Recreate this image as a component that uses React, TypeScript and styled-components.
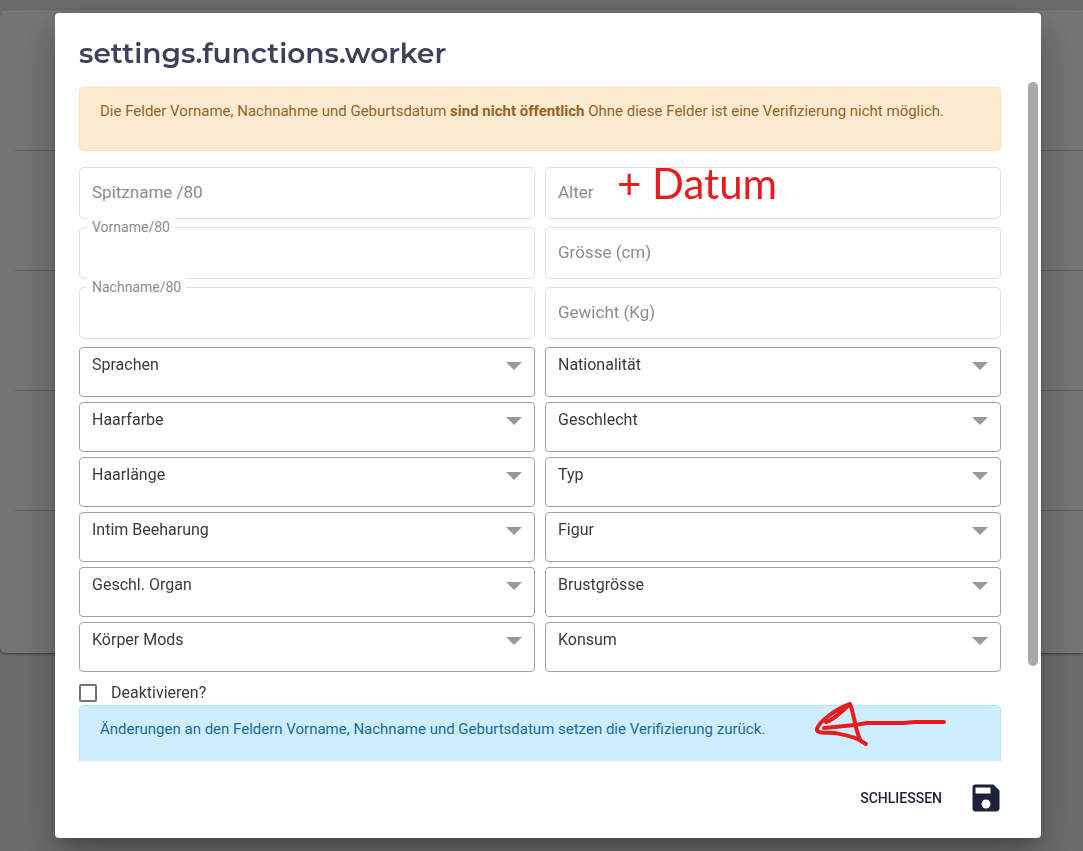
import React, { useId } from "react";
import styled, { createGlobalStyle } from "styled-components";
import { MdSave } from "react-icons/md";

const GlobalStyle = createGlobalStyle`
  * { box-sizing: border-box; }
  body {
    margin: 0;
    background: #ececec;
    font-family: Roboto, "Liberation Sans", sans-serif;
    font-size: 16px;
    color: #3a3a3a;
  }
`;

const Page = styled.main`
  height: 100vh;
  overflow: hidden;
  padding-top: 10px;
`;

const PageCard = styled.section`
  padding: 21px 0 22px 15px;
  background: #fff;
  border-radius: 6px 0 0 6px;
  box-shadow: 0 1px 3px rgba(0, 0, 0, 0.5);
`;

const PageRow = styled.div`
  height: 120px;
  border-bottom: 1px solid #d4d4d4;

  &:last-child {
    border-bottom: 0;
  }
`;

const Backdrop = styled.div`
  position: fixed;
  inset: 0;
  display: flex;
  padding: 13px 42px 13px 55px;
  background: rgba(0, 0, 0, 0.54);
`;

const Dialog = styled.div`
  flex: 1;
  min-width: 0;
  display: flex;
  flex-direction: column;
  background: #fff;
  border-radius: 4px;
  box-shadow: 0 11px 15px -7px rgba(0, 0, 0, 0.2),
    0 24px 38px 3px rgba(0, 0, 0, 0.14), 0 9px 46px 8px rgba(0, 0, 0, 0.12);
`;

const Title = styled.h2`
  margin: 0;
  padding: 20px 24px 9px;
  font-family: Montserrat, Inter, sans-serif;
  font-size: 28px;
  line-height: 40px;
  font-weight: 600;
  color: #3b4259;
`;

const Body = styled.div`
  flex: 1;
  min-height: 0;
  display: flex;
  padding-right: 3px;
`;

const Scroller = styled.div`
  flex: 1;
  min-width: 0;
  overflow-y: auto;
  scrollbar-width: none;
  padding: 5px 27px 20px 24px;
`;

const Track = styled.div`
  width: 10px;
`;

const Thumb = styled.div`
  height: 86%;
  border-radius: 5px;
  background: #a9a9a9;
`;

const Banner = styled.div<{ $tone: "warning" | "info" }>`
  position: relative;
  padding: 12px 20px;
  border: 1px solid ${(p) => (p.$tone === "warning" ? "#fee0b6" : "#b4e5fb")};
  border-radius: 4px;
  background: ${(p) => (p.$tone === "warning" ? "#fdebd0" : "#cdeefd")};
  color: ${(p) => (p.$tone === "warning" ? "#946327" : "#1b699c")};
  font-size: 15px;

  p {
    margin: 0 0 16px;
    line-height: 22px;
  }
`;

const FieldGrid = styled.div<{ $gap: number }>`
  display: grid;
  grid-template-columns: 1fr 1fr;
  gap: ${(p) => p.$gap}px 10px;
`;

const Form = styled.form`
  display: flex;
  flex-direction: column;
  gap: 8px;
  margin-top: 16px;
`;

const Field = styled.div`
  position: relative;
  display: flex;
`;

const TextInput = styled.input`
  width: 100%;
  height: 52px;
  padding: 0 12px;
  border: 1px solid #e0e0e0;
  border-radius: 5px;
  background: #fff;
  font: inherit;
`;

const InputLabel = styled.label<{ $floating?: boolean }>`
  position: absolute;
  left: ${(p) => (p.$floating ? 8 : 13)}px;
  top: ${(p) => (p.$floating ? -10 : 15)}px;
  padding: 0 ${(p) => (p.$floating ? 5 : 0)}px;
  background: #fff;
  font-size: ${(p) => (p.$floating ? 14 : 17)}px;
  line-height: 20px;
  color: #8c8c8c;
`;

const Select = styled.select`
  appearance: none;
  width: 100%;
  height: 50px;
  padding: 0 40px 0 12px;
  border: 1px solid #a3a3a3;
  border-radius: 4px;
  background: #fff;
  font: inherit;
`;

const SelectLabel = styled.label`
  position: absolute;
  left: 13px;
  top: 8px;
  line-height: 20px;
  pointer-events: none;
`;

const Arrow = styled.svg`
  position: absolute;
  right: 13px;
  top: 15px;
  pointer-events: none;
`;

const CheckRow = styled.label`
  display: flex;
  align-items: center;
  gap: 14px;
  height: 25px;
  margin-bottom: -8px;
`;

const Checkbox = styled.input`
  appearance: none;
  width: 18px;
  height: 18px;
  margin: 0;
  border: 2px solid #757575;
  border-radius: 2px;
  background: #fff;

  &:checked {
    background: #757575;
  }
`;

const Footer = styled.footer`
  display: flex;
  justify-content: flex-end;
  align-items: center;
  gap: 26px;
  height: 77px;
  padding: 0 37px 3px 24px;
`;

const CloseButton = styled.button`
  padding: 0;
  border: 0;
  background: none;
  font: 500 14px/36px Roboto, "Liberation Sans", sans-serif;
  text-transform: uppercase;
  color: #1b2239;
`;

const SaveButton = styled.button`
  display: flex;
  padding: 0;
  border: 0;
  background: none;
  color: #1b2239;
`;

const InkNote = styled.span`
  position: absolute;
  left: 72px;
  top: -8px;
  font-family: Lato, sans-serif;
  font-size: 42px;
  line-height: 48px;
  color: #e81c1c;
  pointer-events: none;
`;

const InkArrow = styled.svg`
  position: absolute;
  right: 54px;
  top: -7px;
  overflow: visible;
  pointer-events: none;
`;

function TextField({ label, floating, children }: { label: string; floating?: boolean; children?: React.ReactNode }) {
  const id = useId();
  return (
    <Field>
      <TextInput id={id} type="text" disabled />
      <InputLabel htmlFor={id} $floating={floating}>{label}</InputLabel>
      {children}
    </Field>
  );
}

function SelectField({ label }: { label: string }) {
  const id = useId();
  return (
    <Field>
      <Select id={id}>
        <option value="" />
      </Select>
      <SelectLabel htmlFor={id}>{label}</SelectLabel>
      <Arrow width="16" height="8" viewBox="0 0 16 8" aria-hidden="true">
        <path d="M0 0H16L8 8Z" fill="#999" />
      </Arrow>
    </Field>
  );
}

const selects = [
  "Sprachen", "Nationalität",
  "Haarfarbe", "Geschlecht",
  "Haarlänge", "Typ",
  "Intim Beeharung", "Figur",
  "Geschl. Organ", "Brustgrösse",
  "Körper Mods", "Konsum",
];

export default function App() {
  return (
    <>
      <GlobalStyle />
      <Page>
        <PageCard>
          <PageRow />
          <PageRow />
          <PageRow />
          <PageRow />
          <PageRow />
        </PageCard>
      </Page>
      <Backdrop>
        <Dialog role="dialog" aria-modal="true" aria-labelledby="dialog-title">
          <Title id="dialog-title">settings.functions.worker</Title>
          <Body>
            <Scroller>
              <Banner $tone="warning">
                <p>
                  Die Felder Vorname, Nachnahme und Geburtsdatum <b>sind nicht öffentlich</b> Ohne diese Felder ist eine Verifizierung nicht möglich.
                </p>
              </Banner>
              <Form>
                <FieldGrid $gap={8}>
                  <TextField label="Spitzname /80" />
                  <TextField label="Alter">
                    <InkNote>+ Datum</InkNote>
                  </TextField>
                  <TextField label="Vorname/80" floating />
                  <TextField label="Grösse (cm)" />
                  <TextField label="Nachname/80" floating />
                  <TextField label="Gewicht (Kg)" />
                </FieldGrid>
                <FieldGrid $gap={5}>
                  {selects.map((label) => (
                    <SelectField key={label} label={label} />
                  ))}
                </FieldGrid>
                <CheckRow>
                  <Checkbox type="checkbox" />
                  Deaktivieren?
                </CheckRow>
                <Banner $tone="info">
                  <p>Änderungen an den Feldern Vorname, Nachname und Geburtsdatum setzen die Verifizierung zurück.</p>
                  <InkArrow width="134" height="48" viewBox="812 699 134 48" aria-hidden="true">
                    <path
                      d="M944 722H915L903 723H867L855 725L824 728M826 722C834 720 843 710 850 704C838 708 819 721 817 729C816 734 826 732 835 733C845 735 856 737 861 741L866 744M850 704C855 716 855 732 861 741"
                      fill="none"
                      stroke="#e81c1c"
                      strokeWidth="4"
                      strokeLinecap="round"
                      strokeLinejoin="round"
                    />
                  </InkArrow>
                </Banner>
              </Form>
            </Scroller>
            <Track>
              <Thumb />
            </Track>
          </Body>
          <Footer>
            <CloseButton type="button">Schliessen</CloseButton>
            <SaveButton type="button" aria-label="Speichern">
              <MdSave size={36} />
            </SaveButton>
          </Footer>
        </Dialog>
      </Backdrop>
    </>
  );
}
